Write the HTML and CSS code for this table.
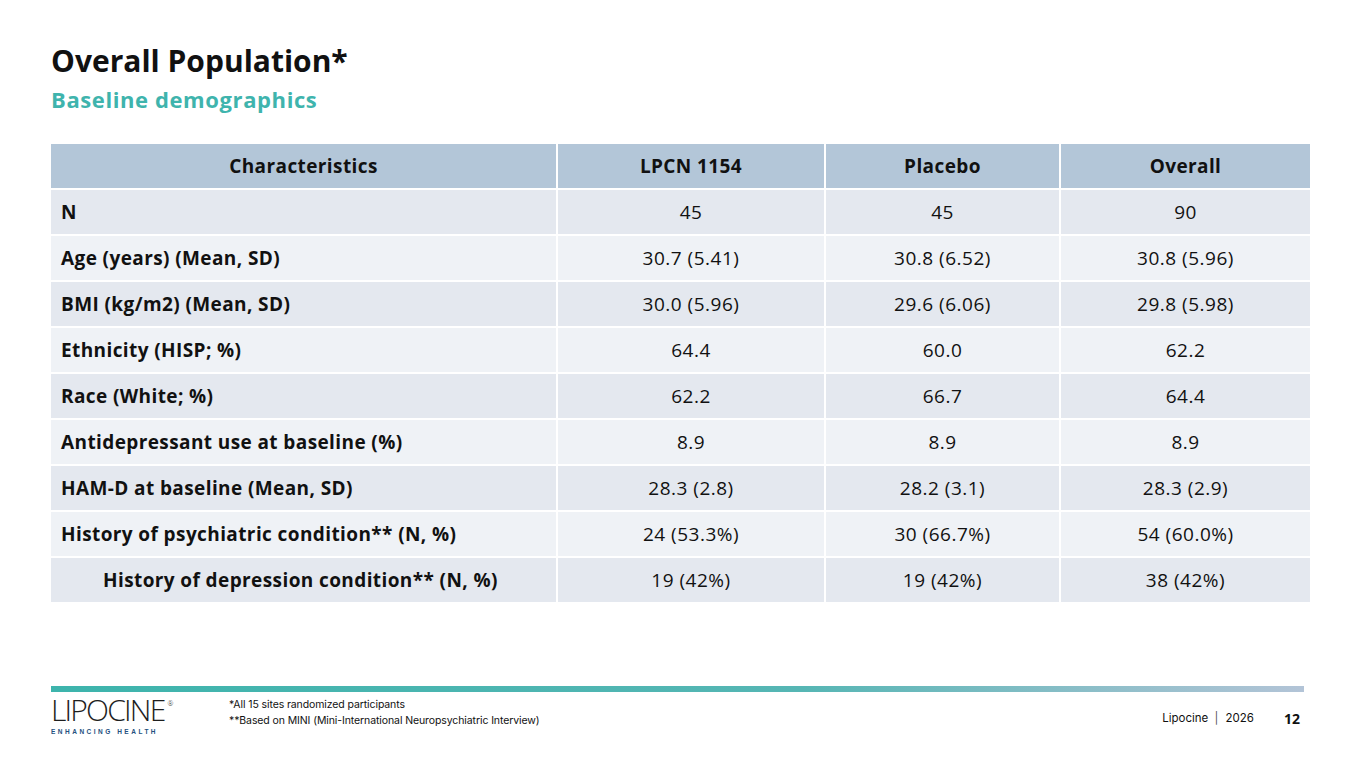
FILE: index.html
```html
<!DOCTYPE html>
<html>
<head>
<meta charset="utf-8">
<link rel="stylesheet" href="styles.css">
</head>
<body>
<div class="slide">
  <header class="head">
    <h1 class="title">Overall Population*</h1>
    <h2 class="subtitle">Baseline demographics</h2>
  </header>
  <table class="demo">
    <thead>
      <tr><th>Characteristics</th><th>LPCN 1154</th><th>Placebo</th><th>Overall</th></tr>
    </thead>
    <tbody>
      <tr><td class="lab">N</td><td>45</td><td>45</td><td>90</td></tr>
      <tr><td class="lab">Age (years) (Mean, SD)</td><td>30.7 (5.41)</td><td>30.8 (6.52)</td><td>30.8 (5.96)</td></tr>
      <tr><td class="lab">BMI (kg/m2) (Mean, SD)</td><td>30.0 (5.96)</td><td>29.6 (6.06)</td><td>29.8 (5.98)</td></tr>
      <tr><td class="lab">Ethnicity (HISP; %)</td><td>64.4</td><td>60.0</td><td>62.2</td></tr>
      <tr><td class="lab">Race (White; %)</td><td>62.2</td><td>66.7</td><td>64.4</td></tr>
      <tr><td class="lab">Antidepressant use at baseline (%)</td><td>8.9</td><td>8.9</td><td>8.9</td></tr>
      <tr><td class="lab">HAM-D at baseline (Mean, SD)</td><td>28.3 (2.8)</td><td>28.2 (3.1)</td><td>28.3 (2.9)</td></tr>
      <tr><td class="lab">History of psychiatric condition** (N, %)</td><td>24 (53.3%)</td><td>30 (66.7%)</td><td>54 (60.0%)</td></tr>
      <tr><td class="lab indent">History of depression condition** (N, %)</td><td>19 (42%)</td><td>19 (42%)</td><td>38 (42%)</td></tr>
    </tbody>
  </table>
  <footer class="foot">
    <div class="rule"></div>
    <div class="foot-row">
      <div class="logo">
        <div class="logo-word">LIPOCINE<sup>®</sup></div>
        <div class="logo-tag">ENHANCING HEALTH</div>
      </div>
      <div class="notes">
        <div>*All 15 sites randomized participants</div>
        <div>**Based on MINI (Mini-International Neuropsychiatric Interview)</div>
      </div>
      <div class="meta">Lipocine <span class="bar">|</span> 2026</div>
      <div class="page">12</div>
    </div>
  </footer>
</div>
</body>
</html>
```
FILE: styles.css
```css
html, body { margin: 0; padding: 0; background: #fff; }
body { font-family: "Open Sans", "Liberation Sans", sans-serif; color: #111; }
.slide { width: 1350px; height: 759px; position: relative; box-sizing: border-box; padding: 43px 41px 0 51px; }
.head { margin-bottom: 31px; }
.title { margin: 0; font-size: 30px; font-weight: 700; line-height: 36px; color: #111; letter-spacing: 0; }
.subtitle { margin: 6px 0 0; font-size: 22px; font-weight: 700; line-height: 28px; color: #3fb4ad; letter-spacing: 0.6px; }
.demo { width: 1259px; border-collapse: collapse; table-layout: fixed; font-size: 19px; letter-spacing: 0.4px; }
.demo th, .demo td { border: 2px solid #fff; height: 44px; padding: 0; text-align: center; }
.demo th:nth-child(1), .demo td:nth-child(1) { width: 505px; }
.demo th:nth-child(2) { width: 266px; }
.demo th:nth-child(3) { width: 233px; }
.demo th { background: #b3c6d8; font-weight: 700; }
.demo td { font-weight: 400; letter-spacing: 0.5px; }
.demo tbody tr:nth-child(odd) td { background: #e4e8ef; }
.demo tbody tr:nth-child(even) td { background: #eff2f6; }
.demo td.lab { text-align: left; font-weight: 700; padding-left: 10px; letter-spacing: 0.4px; }
.demo td.indent { padding-left: 52px; }
.demo tr:first-child th { border-top: 0; }
.demo th:first-child, .demo td:first-child { border-left: 0; }
.demo th:last-child, .demo td:last-child { border-right: 0; }
.foot { position: absolute; left: 51px; right: 46px; top: 686px; }
.rule { height: 6px; background: linear-gradient(to right, #3db4ac 0%, #56b6b4 60%, #b3c4d7 100%); }
.foot-row { display: flex; align-items: flex-start; margin-top: 7px; }
.logo { width: 178px; }
.logo-word { font-family: "Open Sans", sans-serif; font-weight: 300; font-size: 30px; line-height: 22px; height: 24px; letter-spacing: -1.8px; color: #1e1e1e; white-space: nowrap; }
.logo-word sup { font-size: 7px; line-height: 0; vertical-align: 15px; letter-spacing: 0; margin-left: 3px; }
.logo-tag { font-size: 6.5px; font-weight: 700; line-height: 9px; letter-spacing: 2.5px; color: #24507e; margin-top: 4px; font-family: "Liberation Sans", sans-serif; white-space: nowrap; }
.notes { font-size: 10.5px; line-height: 16px; color: #111; margin-top: -2px; font-family: "Inter", sans-serif; letter-spacing: -0.1px; flex: 1; }
.meta { font-size: 11.5px; margin-top: 12px; font-family: "Inter", sans-serif; }
.meta .bar { margin: 0 4px 0 3px; color: #555; }
.page { font-size: 14px; font-weight: 700; margin-top: 10px; width: 50px; text-align: right; padding-right: 4px; box-sizing: border-box; }
```
